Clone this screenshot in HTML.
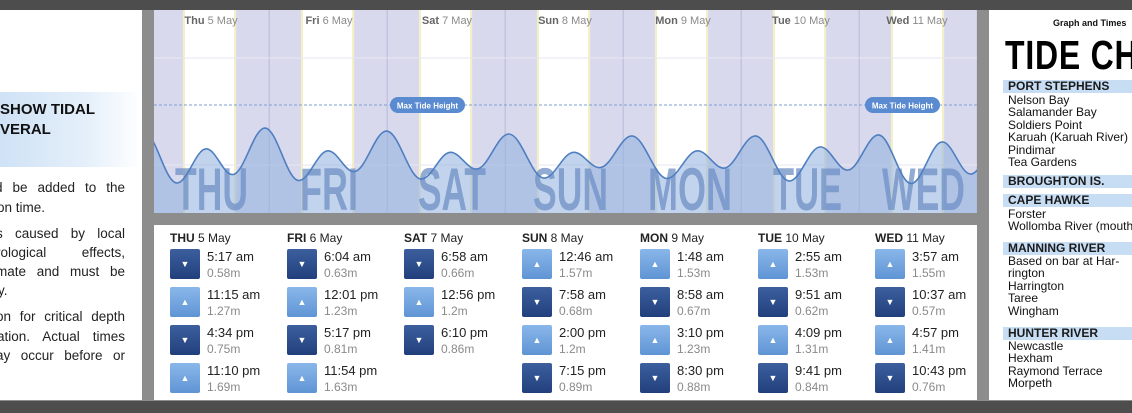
<!DOCTYPE html>
<html><head><meta charset="utf-8"><style>
*{margin:0;padding:0;box-sizing:border-box}
body{width:1132px;height:413px;overflow:hidden;background:#8d8d8d;font-family:"Liberation Sans",Arial,sans-serif;position:relative}
.abs{position:absolute}
#topbar{left:0;top:0;width:1132px;height:10px;background:#4d4d4d}
#botbar{left:0;top:401px;width:1132px;height:12px;background:#4d4d4d}
#left{left:0;top:10px;width:142px;height:390px;background:#fff;overflow:hidden}
#left .h{position:absolute;left:0;top:82px;width:142px;height:75px;background:linear-gradient(90deg,#cfe2f6 0%,#e4effa 60%,#fff 100%)}
#left .h div{position:absolute;left:0;font-weight:bold;font-size:15px;color:#111;white-space:nowrap}
.ln{position:absolute;left:0;width:125px;font-size:13.5px;color:#222;text-align:justify;text-align-last:justify;white-space:nowrap;height:16px;overflow:visible}
.ln.s{text-align-last:left}
#chart{left:154px;top:10px;width:823px;height:203px;overflow:hidden}
#table{left:154px;top:225px;width:823px;height:175px;background:#fff}
.col{position:absolute;top:0}
.col .hd{position:absolute;top:6px;left:0;font-size:12px;color:#222;white-space:nowrap}
.col .hd b{font-weight:bold}
.row{position:absolute;left:0;width:110px;height:30px}
.ic{position:absolute;left:0;top:0;width:30px;height:30px;border-radius:2px;color:#fff;font-size:9px;text-align:center;line-height:30px}
.lo{background:linear-gradient(#3d5f9e,#213f7c)}
.hi{background:linear-gradient(#8ab7ea,#5f94d4)}
.t{position:absolute;left:37px;top:0px;font-size:13px;color:#222;white-space:nowrap}
.m{position:absolute;left:37px;top:17px;font-size:12px;color:#8a8a8a;white-space:nowrap}
#right{left:989px;top:10px;width:143px;height:390px;background:#fff;overflow:hidden}
#right .g{position:absolute;left:64px;top:8px;font-size:9px;font-weight:bold;color:#111;white-space:nowrap}
#right .big{position:absolute;left:16px;top:22px;font-weight:bold;font-size:41px;color:#000;white-space:nowrap;transform:scaleX(0.78);transform-origin:0 0;letter-spacing:1px}
.sec{position:absolute;left:14px;width:140px;height:13px;background:#c7ddf3;font-size:12px;font-weight:bold;line-height:13px;padding-left:5px;color:#1a1a1a;white-space:nowrap}
.it{position:absolute;left:19px;font-size:12px;line-height:12.4px;color:#111;white-space:nowrap}
</style></head><body>
<div class="abs" id="topbar"></div>
<div class="abs" id="botbar"></div>

<div class="abs" id="left">
 <div class="h"><div style="top:9px">SHOW TIDAL</div><div style="top:29px">VERAL</div></div>
 <div class="ln" style="top:170px;left:-5px;width:130px">d be added to the</div>
 <div class="ln s" style="top:190px;left:-3px">on time.</div>
 <div class="ln" style="top:216px;left:-4px;width:129px">s caused by local</div>
 <div class="ln" style="top:235px;left:-4px;width:129px">rological effects,</div>
 <div class="ln" style="top:254px;left:-4px;width:129px">mate and must be</div>
 <div class="ln s" style="top:273px;left:-5px">ly.</div>
 <div class="ln" style="top:299px;left:-4px;width:129px">on for critical depth</div>
 <div class="ln" style="top:319px;left:-3px;width:128px">ation. Actual times</div>
 <div class="ln" style="top:338px;left:-4px;width:129px">ay occur before or</div>
</div>

<div class="abs" id="chart">
<svg id="svg" width="823" height="203" viewBox="154 10 823 203" xmlns="http://www.w3.org/2000/svg" style="display:block">
 <rect x="154" y="10" width="823" height="203" fill="#d9d9ee"/>
 <g id="days"></g>
 <line x1="154" x2="977" y1="58" y2="58" stroke="#e6e6f0" stroke-width="1"/>
 <line x1="154" x2="977" y1="165" y2="165" stroke="#e6e6f0" stroke-width="1"/>
 <line x1="154" x2="977" y1="105" y2="105" stroke="#7d9fd2" stroke-width="1" stroke-dasharray="3,2"/>
 <path id="fill" fill="#8fb0de" fill-opacity="0.55"/>
 <g font-family="Liberation Sans, sans-serif" font-weight="bold" font-size="60" fill="#6d8fc4" fill-opacity="0.75" lengthAdjust="spacingAndGlyphs">
  <text x="175" y="210" textLength="73" lengthAdjust="spacingAndGlyphs">THU</text>
  <text x="300" y="210" textLength="58" lengthAdjust="spacingAndGlyphs">FRI</text>
  <text x="418" y="210" textLength="68" lengthAdjust="spacingAndGlyphs">SAT</text>
  <text x="533" y="210" textLength="75" lengthAdjust="spacingAndGlyphs">SUN</text>
  <text x="648" y="210" textLength="84" lengthAdjust="spacingAndGlyphs">MON</text>
  <text x="773" y="210" textLength="69" lengthAdjust="spacingAndGlyphs">TUE</text>
  <text x="882" y="210" textLength="83" lengthAdjust="spacingAndGlyphs">WED</text>
 </g>
 <path id="curve" fill="none" stroke="#4f7fc0" stroke-width="1.6"/>
 <g font-family="Liberation Sans, sans-serif" font-size="11" fill="#8a8a8a" text-anchor="middle">
  <text x="211" y="24"><tspan font-weight="bold" fill="#666">Thu</tspan> 5 May</text>
  <text x="329" y="24"><tspan font-weight="bold" fill="#666">Fri</tspan> 6 May</text>
  <text x="447" y="24"><tspan font-weight="bold" fill="#666">Sat</tspan> 7 May</text>
  <text x="565" y="24"><tspan font-weight="bold" fill="#666">Sun</tspan> 8 May</text>
  <text x="683" y="24"><tspan font-weight="bold" fill="#666">Mon</tspan> 9 May</text>
  <text x="801" y="24"><tspan font-weight="bold" fill="#666">Tue</tspan> 10 May</text>
  <text x="917" y="24"><tspan font-weight="bold" fill="#666">Wed</tspan> 11 May</text>
 </g>
 <rect x="390" y="97" width="75" height="16" rx="8" fill="#5a8ad0"/>
 <text x="427.5" y="108.5" font-family="Liberation Sans, sans-serif" font-size="8" font-weight="bold" fill="#fff" text-anchor="middle">Max Tide Height</text>
 <rect x="865" y="97" width="75" height="16" rx="8" fill="#5a8ad0"/>
 <text x="902.5" y="108.5" font-family="Liberation Sans, sans-serif" font-size="8" font-weight="bold" fill="#fff" text-anchor="middle">Max Tide Height</text>
</svg>
</div>

<div class="abs" id="table">
 <div class="col" style="left:16px"><div class="hd"><b>THU</b> 5 May</div>
  <div class="row" style="top:24px"><div class="ic lo">▼</div><div class="t">5:17 am</div><div class="m">0.58m</div></div>
  <div class="row" style="top:62px"><div class="ic hi">▲</div><div class="t">11:15 am</div><div class="m">1.27m</div></div>
  <div class="row" style="top:100px"><div class="ic lo">▼</div><div class="t">4:34 pm</div><div class="m">0.75m</div></div>
  <div class="row" style="top:138px"><div class="ic hi">▲</div><div class="t">11:10 pm</div><div class="m">1.69m</div></div>
 </div>
 <div class="col" style="left:133px"><div class="hd"><b>FRI</b> 6 May</div>
  <div class="row" style="top:24px"><div class="ic lo">▼</div><div class="t">6:04 am</div><div class="m">0.63m</div></div>
  <div class="row" style="top:62px"><div class="ic hi">▲</div><div class="t">12:01 pm</div><div class="m">1.23m</div></div>
  <div class="row" style="top:100px"><div class="ic lo">▼</div><div class="t">5:17 pm</div><div class="m">0.81m</div></div>
  <div class="row" style="top:138px"><div class="ic hi">▲</div><div class="t">11:54 pm</div><div class="m">1.63m</div></div>
 </div>
 <div class="col" style="left:250px"><div class="hd"><b>SAT</b> 7 May</div>
  <div class="row" style="top:24px"><div class="ic lo">▼</div><div class="t">6:58 am</div><div class="m">0.66m</div></div>
  <div class="row" style="top:62px"><div class="ic hi">▲</div><div class="t">12:56 pm</div><div class="m">1.2m</div></div>
  <div class="row" style="top:100px"><div class="ic lo">▼</div><div class="t">6:10 pm</div><div class="m">0.86m</div></div>
 </div>
 <div class="col" style="left:368px"><div class="hd"><b>SUN</b> 8 May</div>
  <div class="row" style="top:24px"><div class="ic hi">▲</div><div class="t">12:46 am</div><div class="m">1.57m</div></div>
  <div class="row" style="top:62px"><div class="ic lo">▼</div><div class="t">7:58 am</div><div class="m">0.68m</div></div>
  <div class="row" style="top:100px"><div class="ic hi">▲</div><div class="t">2:00 pm</div><div class="m">1.2m</div></div>
  <div class="row" style="top:138px"><div class="ic lo">▼</div><div class="t">7:15 pm</div><div class="m">0.89m</div></div>
 </div>
 <div class="col" style="left:486px"><div class="hd"><b>MON</b> 9 May</div>
  <div class="row" style="top:24px"><div class="ic hi">▲</div><div class="t">1:48 am</div><div class="m">1.53m</div></div>
  <div class="row" style="top:62px"><div class="ic lo">▼</div><div class="t">8:58 am</div><div class="m">0.67m</div></div>
  <div class="row" style="top:100px"><div class="ic hi">▲</div><div class="t">3:10 pm</div><div class="m">1.23m</div></div>
  <div class="row" style="top:138px"><div class="ic lo">▼</div><div class="t">8:30 pm</div><div class="m">0.88m</div></div>
 </div>
 <div class="col" style="left:604px"><div class="hd"><b>TUE</b> 10 May</div>
  <div class="row" style="top:24px"><div class="ic hi">▲</div><div class="t">2:55 am</div><div class="m">1.53m</div></div>
  <div class="row" style="top:62px"><div class="ic lo">▼</div><div class="t">9:51 am</div><div class="m">0.62m</div></div>
  <div class="row" style="top:100px"><div class="ic hi">▲</div><div class="t">4:09 pm</div><div class="m">1.31m</div></div>
  <div class="row" style="top:138px"><div class="ic lo">▼</div><div class="t">9:41 pm</div><div class="m">0.84m</div></div>
 </div>
 <div class="col" style="left:721px"><div class="hd"><b>WED</b> 11 May</div>
  <div class="row" style="top:24px"><div class="ic hi">▲</div><div class="t">3:57 am</div><div class="m">1.55m</div></div>
  <div class="row" style="top:62px"><div class="ic lo">▼</div><div class="t">10:37 am</div><div class="m">0.57m</div></div>
  <div class="row" style="top:100px"><div class="ic hi">▲</div><div class="t">4:57 pm</div><div class="m">1.41m</div></div>
  <div class="row" style="top:138px"><div class="ic lo">▼</div><div class="t">10:43 pm</div><div class="m">0.76m</div></div>
 </div>
</div>

<div class="abs" id="right">
 <div class="g">Graph and Times</div>
 <div class="big">TIDE CHARTS</div>
 <div class="sec" style="top:70px">PORT STEPHENS</div>
 <div class="it" style="top:84px">Nelson Bay<br>Salamander Bay<br>Soldiers Point<br>Karuah (Karuah River)<br>Pindimar<br>Tea Gardens</div>
 <div class="sec" style="top:165px">BROUGHTON IS.</div>
 <div class="sec" style="top:184px">CAPE HAWKE</div>
 <div class="it" style="top:198px">Forster<br>Wollomba River (mouth)</div>
 <div class="sec" style="top:232px">MANNING RIVER</div>
 <div class="it" style="top:245px">Based on bar at Har-<br>rington<br>Harrington<br>Taree<br>Wingham</div>
 <div class="sec" style="top:317px">HUNTER RIVER</div>
 <div class="it" style="top:330px">Newcastle<br>Hexham<br>Raymond Terrace<br>Morpeth</div>
</div>

<script>
(function(){
 var NS="http://www.w3.org/2000/svg";
 var days=document.getElementById("days");
 var X=function(t){return 151+t*118/24;};
 for(var d=-1;d<8;d++){
  var s=X(d*24+6.5),e=X(d*24+17.3);
  var r=document.createElementNS(NS,"rect");
  r.setAttribute("x",s);r.setAttribute("y",10);r.setAttribute("width",e-s);r.setAttribute("height",203);r.setAttribute("fill","#fff");days.appendChild(r);
  [s,e-2].forEach(function(x){var y=document.createElementNS(NS,"rect");y.setAttribute("x",x);y.setAttribute("y",10);y.setAttribute("width",2);y.setAttribute("height",203);y.setAttribute("fill","#f4efc4");days.appendChild(y);});
  var m=document.createElementNS(NS,"rect");
  m.setAttribute("x",X(d*24)-0.5);m.setAttribute("y",10);m.setAttribute("width",1.5);m.setAttribute("height",203);m.setAttribute("fill","#c3c3de");days.appendChild(m);
 }
 var pts=[[-1.5,1.62],[5.28,.58],[11.25,1.27],[16.57,.75],[23.17,1.69],[30.07,.63],[36.02,1.23],[41.28,.81],[47.9,1.63],[54.97,.66],[60.93,1.2],[66.17,.86],[72.77,1.57],[79.97,.68],[86,1.2],[91.25,.89],[97.8,1.53],[104.97,.67],[111.17,1.23],[116.5,.88],[122.92,1.53],[129.85,.62],[136.15,1.31],[141.68,.84],[147.95,1.55],[154.62,.57],[160.95,1.41],[166.72,.76],[173,1.5]];
 var P=pts.map(function(p){return [X(p[0]),183-(p[1]-0.58)*49.5];});
 var d="M"+P[0][0]+","+P[0][1];
 for(var i=1;i<P.length;i++){var a=P[i-1],b=P[i],dx=b[0]-a[0];
  d+=" C"+(a[0]+dx*0.36)+","+a[1]+" "+(b[0]-dx*0.36)+","+b[1]+" "+b[0]+","+b[1];}
 document.getElementById("curve").setAttribute("d",d);
 document.getElementById("fill").setAttribute("d",d+" L"+P[P.length-1][0]+",213 L"+P[0][0]+",213 Z");
})();
</script>
</body></html>
